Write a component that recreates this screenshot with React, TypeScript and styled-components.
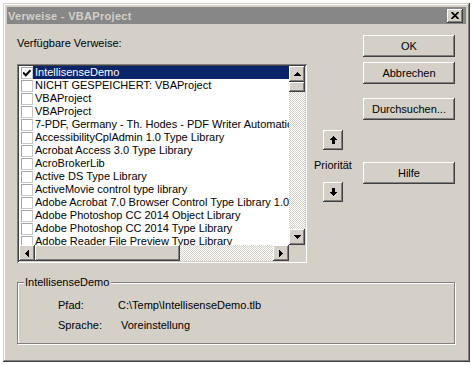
import React from 'react';
import styled, { createGlobalStyle } from 'styled-components';

const FACE = '#d4d0c8';

const GlobalStyle = createGlobalStyle`
  body {
    margin: 0;
    background: #fff;
    font-family: 'Liberation Sans', Arial, sans-serif;
    font-size: 11px;
    color: #000;
  }
`;

const raised = `
  background: ${FACE};
  box-shadow: inset -1px -1px #404040, inset 1px 1px #fff, inset -2px -2px #808080, inset 2px 2px ${FACE};
`;

const Window = styled.div`
  box-sizing: border-box;
  width: 467px;
  height: 359px;
  margin: 3px;
  padding: 4px;
  background: ${FACE};
  box-shadow: inset -1px -1px #404040, inset 1px 1px ${FACE}, inset -2px -2px #808080, inset 2px 2px #fff;
  display: flex;
  flex-direction: column;
`;

const TitleBar = styled.div`
  height: 17px;
  flex: none;
  background: #878787;
  display: flex;
  align-items: center;
  justify-content: space-between;
  padding: 0 3px 0 1px;
  color: ${FACE};
  font-weight: bold;
  letter-spacing: 0.3px;
`;

const CloseButton = styled.div`
  ${raised}
  width: 16px;
  height: 14px;
  display: flex;
  align-items: center;
  justify-content: center;
`;

const Body = styled.div`
  flex: 1;
  display: flex;
  flex-direction: column;
  padding: 11px 11px 14px 10px;
`;

const TopSection = styled.div`
  display: flex;
`;

const LeftCol = styled.div`
  width: 290px;
  display: flex;
  flex-direction: column;
`;

const Label = styled.div`
  line-height: 13px;
  margin: 2px 0 14px;
`;

const ListBox = styled.div`
  box-sizing: border-box;
  height: 199px;
  padding: 2px;
  background: #fff;
  box-shadow: inset 1px 1px #808080, inset -1px -1px #fff, inset 2px 2px #404040, inset -2px -2px ${FACE};
  display: grid;
  grid-template-columns: 270px 16px;
  grid-template-rows: 179px 16px;
`;

const Rows = styled.div`
  overflow: hidden;
  background: #fff;
`;

const Row = styled.div`
  display: flex;
  align-items: center;
  height: 13px;
  white-space: nowrap;
`;

const CheckBox = styled.div`
  box-sizing: border-box;
  flex: none;
  width: 12px;
  height: 12px;
  margin-left: 2px;
  border: 1px solid #a6a6a6;
  border-right-color: #c8c8c8;
  border-bottom-color: #c8c8c8;
  background: #fff;
  display: flex;
  align-items: center;
  justify-content: center;
`;

const ItemText = styled.div<{ $selected?: boolean }>`
  flex: 1;
  height: 13px;
  line-height: 13px;
  padding-left: 2px;
  background: ${p => (p.$selected ? '#0a246a' : 'transparent')};
  color: ${p => (p.$selected ? '#fff' : '#000')};
`;

const VScroll = styled.div`
  display: flex;
  flex-direction: column;
`;

const HScroll = styled.div`
  display: flex;
`;

const Corner = styled.div`
  background: ${FACE};
`;

const ArrowButton = styled.div`
  ${raised}
  flex: none;
  width: 16px;
  height: 16px;
  display: flex;
  align-items: center;
  justify-content: center;
`;

const Thumb = styled.div<{ $w?: number; $h?: number }>`
  ${raised}
  flex: none;
  width: ${p => (p.$w ? `${p.$w}px` : '16px')};
  height: ${p => (p.$h ? `${p.$h}px` : '16px')};
`;

const Track = styled.div`
  flex: 1;
  background: repeating-conic-gradient(${FACE} 0 25%, #fff 0 50%) 0 0 / 2px 2px;
`;

const MidCol = styled.div`
  width: 56px;
  display: flex;
  flex-direction: column;
  padding: 95px 0 0 16px;
  box-sizing: border-box;
`;

const PriorityButton = styled.div`
  ${raised}
  width: 20px;
  height: 20px;
  display: flex;
  align-items: center;
  justify-content: center;
`;

const PriorityLabel = styled.div`
  line-height: 13px;
  margin: 9px 0 10px -9px;
`;

const RightCol = styled.div`
  width: 92px;
  display: flex;
  flex-direction: column;
`;

const PushButton = styled.div<{ $gap?: number }>`
  ${raised}
  height: 22px;
  margin-top: ${p => p.$gap ?? 0}px;
  display: flex;
  align-items: center;
  justify-content: center;
`;

const GroupBox = styled.div`
  position: relative;
  margin-top: 19px;
  height: 62px;
  box-sizing: border-box;
  border: 1px solid #808080;
  box-shadow: 1px 1px #fff, inset 1px 1px #fff;
  padding: 16px 0 0 40px;
  display: grid;
  grid-template-columns: 60px 1fr;
  grid-auto-rows: 20px;
  align-content: start;
`;

const Legend = styled.div`
  position: absolute;
  left: 6px;
  top: -7px;
  padding: 0 2px 0 1px;
  line-height: 13px;
  background: ${FACE};
`;

const InfoCell = styled.div<{ $indent?: number }>`
  line-height: 13px;
  padding-left: ${p => p.$indent ?? 0}px;
`;

const items = [
  'IntellisenseDemo',
  'NICHT GESPEICHERT: VBAProject',
  'VBAProject',
  'VBAProject',
  '7-PDF, Germany - Th. Hodes - PDF Writer Automation',
  'AccessibilityCplAdmin 1.0 Type Library',
  'Acrobat Access 3.0 Type Library',
  'AcroBrokerLib',
  'Active DS Type Library',
  'ActiveMovie control type library',
  'Adobe Acrobat 7.0 Browser Control Type Library 1.0',
  'Adobe Photoshop CC 2014 Object Library',
  'Adobe Photoshop CC 2014 Type Library',
  'Adobe Reader File Preview Type Library',
];

const Tri = ({ dir }: { dir: 'up' | 'down' | 'left' | 'right' }) => {
  const paths = {
    up: 'M3 0h1v1h1v1h1v1h1v1H0V3h1V2h1V1h1z',
    down: 'M0 0h7v1H6v1H5v1H4v1H3V3H2V2H1V1H0z',
    left: 'M3 0h1v7H3V6H2V5H1V4H0V3h1V2h1V1h1z',
    right: 'M0 0h1v1h1v1h1v1h1v1H3v1H2v1H1v1H0z',
  };
  const vertical = dir === 'up' || dir === 'down';
  return (
    <svg width={vertical ? 7 : 4} height={vertical ? 4 : 7} viewBox={vertical ? '0 0 7 4' : '0 0 4 7'}>
      <path d={paths[dir]} fill="#000" />
    </svg>
  );
};

const PrioArrow = ({ down }: { down?: boolean }) => (
  <svg width="7" height="8" viewBox="0 0 7 8" style={down ? { transform: 'scaleY(-1)' } : undefined}>
    <path d="M3 0h1v1h1v1h1v1h1v1H5v4H2V4H0V3h1V2h1V1h1z" fill="#000" />
  </svg>
);

const CheckMark = () => (
  <svg width="8" height="8" viewBox="0 0 8 8">
    <path d="M0 3.5 L2.8 6.3 L7.5 1.2" fill="none" stroke="#000" strokeWidth="2" />
  </svg>
);

export default function App() {
  return (
    <>
      <GlobalStyle />
      <Window>
        <TitleBar>
          <span>Verweise - VBAProject</span>
          <CloseButton>
            <svg width="8" height="7" viewBox="0 0 8 7">
              <path d="M0.5 0 L7.5 7 M7.5 0 L0.5 7" stroke="#000" strokeWidth="1.7" />
            </svg>
          </CloseButton>
        </TitleBar>
        <Body>
          <TopSection>
            <LeftCol>
              <Label>Verfügbare Verweise:</Label>
              <ListBox>
                <Rows>
                  {items.map((text, i) => (
                    <Row key={i}>
                      <CheckBox>{i === 0 && <CheckMark />}</CheckBox>
                      <ItemText $selected={i === 0}>{text}</ItemText>
                    </Row>
                  ))}
                </Rows>
                <VScroll>
                  <ArrowButton>
                    <Tri dir="up" />
                  </ArrowButton>
                  <Thumb $h={10} />
                  <Track />
                  <ArrowButton>
                    <Tri dir="down" />
                  </ArrowButton>
                </VScroll>
                <HScroll>
                  <ArrowButton>
                    <Tri dir="left" />
                  </ArrowButton>
                  <Thumb $w={145} />
                  <Track />
                  <ArrowButton>
                    <Tri dir="right" />
                  </ArrowButton>
                </HScroll>
                <Corner />
              </ListBox>
            </LeftCol>
            <MidCol>
              <PriorityButton>
                <PrioArrow />
              </PriorityButton>
              <PriorityLabel>Priorität</PriorityLabel>
              <PriorityButton>
                <PrioArrow down />
              </PriorityButton>
            </MidCol>
            <RightCol>
              <PushButton>OK</PushButton>
              <PushButton $gap={5}>Abbrechen</PushButton>
              <PushButton $gap={14}>Durchsuchen...</PushButton>
              <PushButton $gap={42}>Hilfe</PushButton>
            </RightCol>
          </TopSection>
          <GroupBox>
            <Legend>IntellisenseDemo</Legend>
            <InfoCell>Pfad:</InfoCell>
            <InfoCell>C:\Temp\IntellisenseDemo.tlb</InfoCell>
            <InfoCell>Sprache:</InfoCell>
            <InfoCell $indent={3}>Voreinstellung</InfoCell>
          </GroupBox>
        </Body>
      </Window>
    </>
  );
}
